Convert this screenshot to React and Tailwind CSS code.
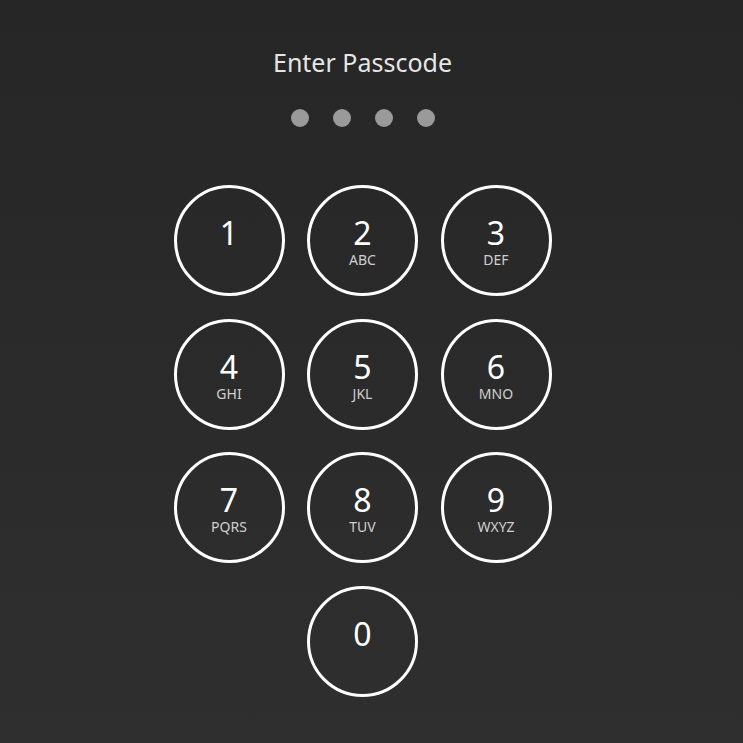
import React from "react";

const keys = [
  ["1", ""], ["2", "ABC"], ["3", "DEF"],
  ["4", "GHI"], ["5", "JKL"], ["6", "MNO"],
  ["7", "PQRS"], ["8", "TUV"], ["9", "WXYZ"],
];

function Key({ d, l }) {
  return (
    <button className="w-[111px] h-[111px] rounded-full border-[3px] border-white flex flex-col items-center justify-start pt-[29px] text-white">
      <span className="block text-[32px] leading-[32px]">{d}</span>
      <span className="block text-[14px] leading-[14px] mt-[4px] text-[#cfcfcf] h-[14px]">{l}</span>
    </button>
  );
}

export default function App() {
  return (
    <div
      className="w-full min-h-[743px] bg-gradient-to-b from-[#262626] to-[#2f2f2f] flex flex-col items-center pt-[44px] pr-[18px]"
      style={{ fontFamily: '"Segoe UI", "Noto Sans", "Open Sans", sans-serif' }}
    >
      <h1 className="text-[25px] leading-[36px] text-[#e6e6e6]">Enter Passcode</h1>
      <div className="flex gap-[24px] mt-[29px]">
        {[0, 1, 2, 3].map((i) => (
          <div key={i} className="w-[18px] h-[18px] rounded-full bg-[#9a9a9a]" />
        ))}
      </div>
      <div className="grid grid-cols-3 gap-x-[22.5px] gap-y-[22.5px] mt-[58px]">
        {keys.map(([d, l]) => (
          <Key key={d} d={d} l={l} />
        ))}
        <div />
        <Key d="0" l="" />
      </div>
    </div>
  );
}
